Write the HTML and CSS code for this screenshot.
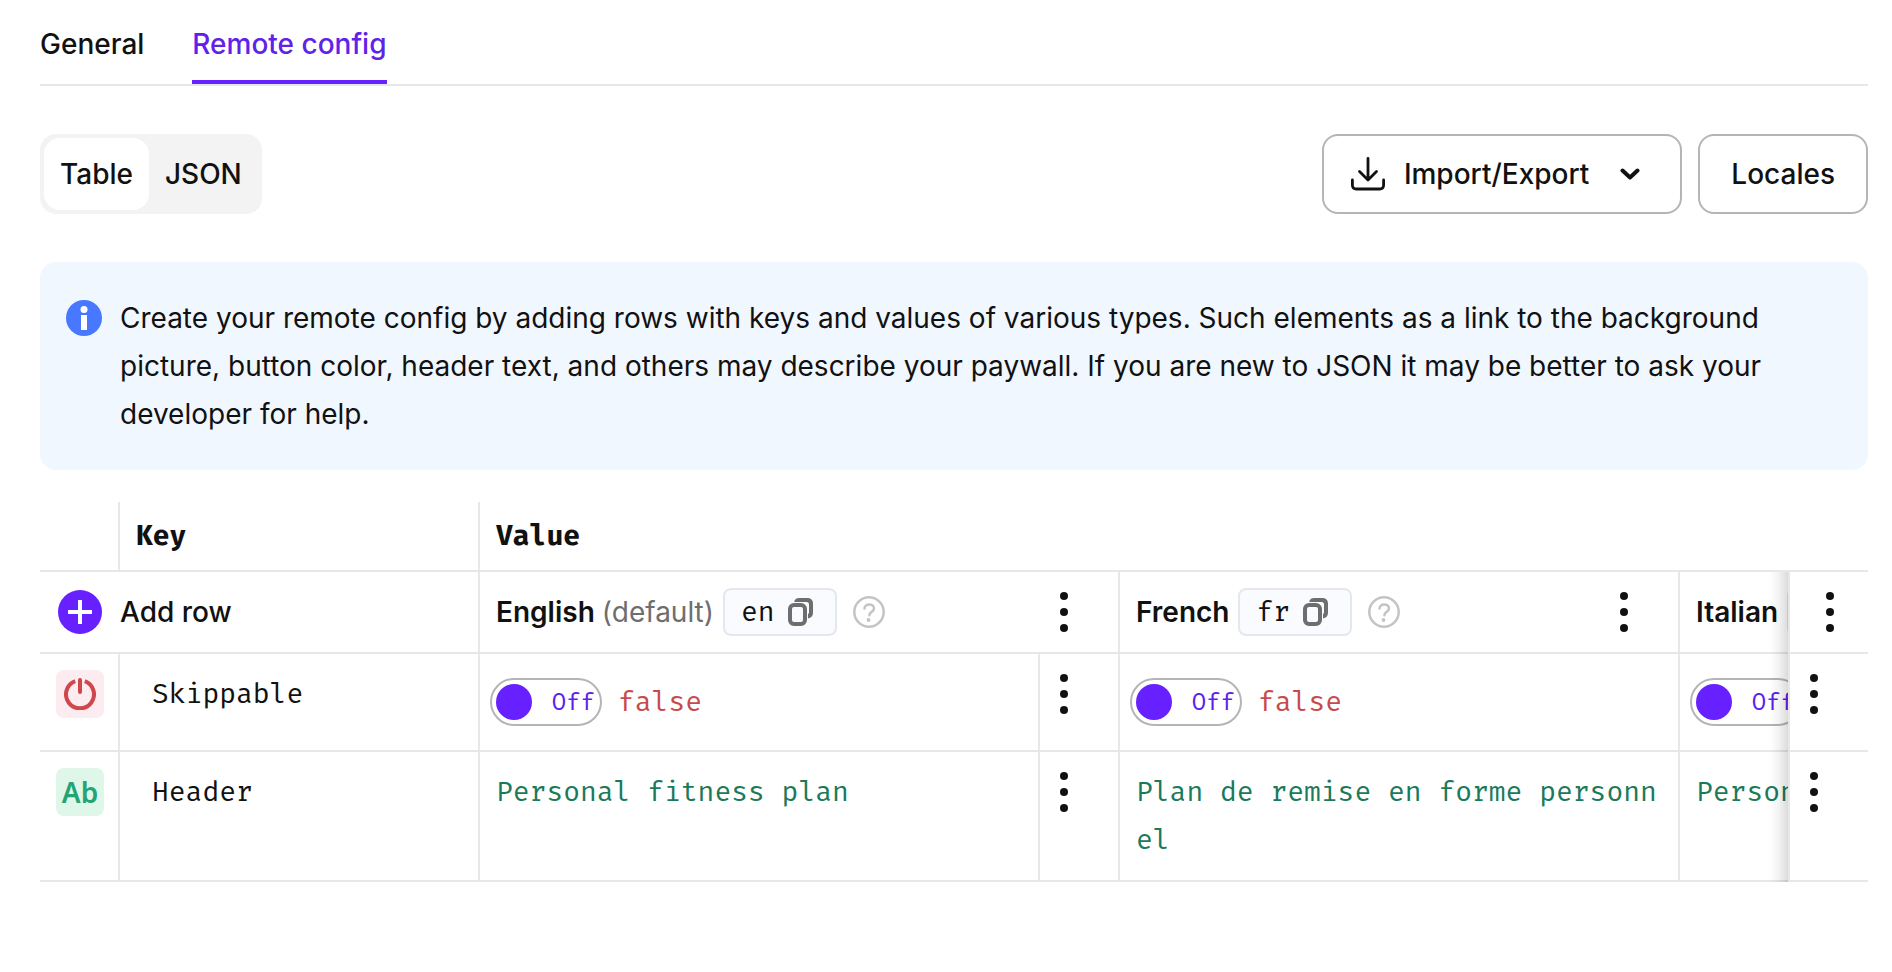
FILE: index.html
```html
<!DOCTYPE html>
<html lang="en">
<head>
<meta charset="utf-8">
<meta name="viewport" content="width=device-width, initial-scale=1">
<title>Remote config</title>
<link rel="stylesheet" href="styles.css">
</head>
<body>
<svg class="sprite" aria-hidden="true">
  <symbol id="dots" viewBox="0 0 48 48"><circle cx="24" cy="8" r="4"/><circle cx="24" cy="24" r="4"/><circle cx="24" cy="40" r="4"/></symbol>
  <symbol id="copy" viewBox="0 0 32 32"><rect x="3" y="9" width="15" height="19" rx="4" fill="none" stroke="currentColor" stroke-width="4"/><path d="M7.500 4.500C8.500 2.800 10.200 2 12 2h8.500c3.300 0 5.500 2.200 5.500 5.500V17c0 3-2 5-5 5.500v-4.500c.7-.4 1-1 1-2V8.500C22 7 21.300 6 19.500 6H7.300z" fill="currentColor"/></symbol>
  <symbol id="help" viewBox="0 0 32 32"><circle cx="16" cy="16" r="14.700" fill="none" stroke="currentColor" stroke-width="2.500"/><path d="M11.500 12.500c0-2.400 2-4 4.700-4s4.800 1.500 4.800 3.900c0 3.400-4.600 3.200-4.600 6.800" fill="none" stroke="currentColor" stroke-width="2.500" stroke-linecap="round"/><circle cx="15.500" cy="24" r="1.900" fill="currentColor"/></symbol>
</svg>
<main class="page">
  <nav class="tabs">
    <a class="tab" href="#general">General</a>
    <a class="tab tab-active" href="#remote-config" aria-current="page">Remote config</a>
  </nav>

  <div class="toolbar">
    <div class="segment">
      <button class="segment-item segment-active" type="button">Table</button>
      <button class="segment-item" type="button">JSON</button>
    </div>
    <div class="actions">
      <button class="button button-menu" type="button">
        <svg class="icon-download" viewBox="0 0 36 36" aria-hidden="true"><path d="M18 2.500V24M9.500 15.500l8.500 8.500 8.500-8.500M2.400 24v5c0 2.500 1.500 4 4 4h23.200c2.500 0 4-1.500 4-4v-5" fill="none" stroke="currentColor" stroke-width="2.800" stroke-linecap="round" stroke-linejoin="round"/></svg>
        <span>Import/Export</span>
        <svg class="icon-chevron" viewBox="0 0 20 12" aria-hidden="true"><path d="M2.500 2.500L10 9.500l7.500-7" fill="none" stroke="currentColor" stroke-width="4" stroke-linecap="round" stroke-linejoin="round"/></svg>
      </button>
      <button class="button" type="button">Locales</button>
    </div>
  </div>

  <section class="notice">
    <svg class="icon-info" viewBox="0 0 36 36" aria-hidden="true"><circle cx="18" cy="18" r="18" fill="#4778ff"/><circle cx="18" cy="9.500" r="3.500" fill="#fff"/><path d="M15 15h6v15h-6z" fill="#fff"/></svg>
    <p class="notice-text">Create your remote config by adding rows with keys and values of various types. Such elements as a link to the background picture, button color, header text, and others may describe your paywall. If you are new to JSON it may be better to ask your developer for help.</p>
  </section>

  <div class="table-scroll">
    <table class="config">
      <colgroup>
        <col class="col-narrow"><col class="col-key"><col class="col-value"><col class="col-narrow"><col class="col-value"><col class="col-value"><col class="col-narrow">
      </colgroup>
      <thead>
        <tr class="row-titles">
          <th class="cell"></th>
          <th class="cell title">Key</th>
          <th class="cell title cell-last" colspan="5">Value</th>
        </tr>
        <tr>
          <th class="cell cell-add" colspan="2">
            <button class="add-row" type="button">
              <svg class="icon-add" viewBox="0 0 44 44" aria-hidden="true"><circle cx="22" cy="22" r="22" fill="#6720ff"/><path d="M22 10v24M10 22h24" stroke="#fff" stroke-width="4"/></svg>
              <span>Add row</span>
            </button>
          </th>
          <th class="cell" colspan="2">
            <div class="locale">
              <span class="locale-name">English <span class="muted">(default)</span></span>
              <button class="code" type="button">en<svg class="icon-copy" aria-hidden="true"><use href="#copy"/></svg></button>
              <svg class="icon-help" aria-hidden="true"><use href="#help"/></svg>
              <button class="more" type="button" aria-label="English options"><svg class="icon-dots"><use href="#dots"/></svg></button>
            </div>
          </th>
          <th class="cell">
            <div class="locale">
              <span class="locale-name">French</span>
              <button class="code" type="button">fr<svg class="icon-copy" aria-hidden="true"><use href="#copy"/></svg></button>
              <svg class="icon-help" aria-hidden="true"><use href="#help"/></svg>
              <button class="more" type="button" aria-label="French options"><svg class="icon-dots"><use href="#dots"/></svg></button>
            </div>
          </th>
          <th class="cell">
            <div class="locale">
              <span class="locale-name">Italian</span>
              <button class="code" type="button">it<svg class="icon-copy" aria-hidden="true"><use href="#copy"/></svg></button>
            </div>
          </th>
          <th class="cell cell-pinned"><button class="more" type="button" aria-label="All locales options"><svg class="icon-dots"><use href="#dots"/></svg></button></th>
        </tr>
      </thead>
      <tbody>
        <tr>
          <td class="cell cell-type"><span class="type type-bool"><svg class="icon-power" viewBox="0 0 32 32" aria-hidden="true"><path d="M11.200 3.200a14 14 0 1 0 9.600 0" fill="none" stroke="currentColor" stroke-width="4"/><path d="M16 2v12" stroke="currentColor" stroke-width="4" stroke-linecap="round"/></svg></span></td>
          <td class="cell cell-key">Skippable</td>
          <td class="cell cell-switch"><div class="bool"><label class="switch"><input class="knob" type="checkbox">Off</label><span class="bool-value">false</span></div></td>
          <td class="cell cell-menu"><button class="more" type="button" aria-label="Skippable English options"><svg class="icon-dots"><use href="#dots"/></svg></button></td>
          <td class="cell cell-switch"><div class="bool"><label class="switch"><input class="knob" type="checkbox">Off</label><span class="bool-value">false</span></div></td>
          <td class="cell cell-switch"><div class="bool"><label class="switch"><input class="knob" type="checkbox">Off</label><span class="bool-value">false</span></div></td>
          <td class="cell cell-menu cell-pinned"><button class="more" type="button" aria-label="Skippable options"><svg class="icon-dots"><use href="#dots"/></svg></button></td>
        </tr>
        <tr>
          <td class="cell cell-type"><span class="type type-text">Ab</span></td>
          <td class="cell cell-key">Header</td>
          <td class="cell cell-text">Personal fitness plan</td>
          <td class="cell cell-menu"><button class="more" type="button" aria-label="Header English options"><svg class="icon-dots"><use href="#dots"/></svg></button></td>
          <td class="cell cell-text">Plan de remise en forme personnel</td>
          <td class="cell cell-text">Personal</td>
          <td class="cell cell-menu cell-pinned"><button class="more" type="button" aria-label="Header options"><svg class="icon-dots"><use href="#dots"/></svg></button></td>
        </tr>
      </tbody>
    </table>
  </div>
</main>
</body>
</html>
```

FILE: styles.css
```css
:root {
  --ink: #111;
  --line: #e7e7e7;
  --accent: #6720ff;
  --sans: Inter, "Liberation Sans", sans-serif;
  --mono: "Fira Mono", "Fira Code", "Liberation Mono", monospace;
}

* { box-sizing: border-box; }

body {
  margin: 0;
  background: #fff;
  color: var(--ink);
  font: 28px/48px var(--sans);
}

button {
  margin: 0;
  padding: 0;
  border: 0;
  background: none;
  color: inherit;
  font: inherit;
  cursor: pointer;
}

svg { display: block; flex: none; }

.sprite { position: absolute; width: 0; height: 0; }

.page { padding: 0 24px 0 40px; }

.tabs {
  display: flex;
  gap: 48px;
  border-bottom: 2px solid var(--line);
}

.tab {
  padding: 20px 0 12px;
  border-bottom: 4px solid transparent;
  color: inherit;
  font-weight: 500;
  text-decoration: none;
}

.tab-active { border-color: var(--accent); color: #6022e8; }

.toolbar {
  display: flex;
  justify-content: space-between;
  margin: 48px 0;
}

.segment {
  display: flex;
  padding: 4px;
  border-radius: 16px;
  background: #f3f3f3;
}

.segment-item {
  height: 72px;
  padding: 0 16px;
  border-radius: 16px;
  font-weight: 500;
}

.segment-active { background: #fff; }

.actions { display: flex; gap: 16px; }

.button {
  display: flex;
  align-items: center;
  height: 80px;
  padding: 0 31px;
  border: 2px solid #b5b5b5;
  border-radius: 16px;
  font-weight: 500;
}

.button-menu { gap: 18px; padding: 0 40px 0 26px; }
.icon-download { width: 36px; height: 36px; }
.icon-chevron { width: 20px; height: 12px; margin-left: 13px; }

.notice {
  display: flex;
  gap: 18px;
  padding: 32px 24px 32px 26px;
  border-radius: 16px;
  background: #f1f7ff;
}

.icon-info { width: 36px; height: 36px; margin-top: 6px; }
.notice-text { margin: 0; }

.table-scroll {
  margin-top: 32px;
  overflow-x: auto;
  scrollbar-width: none;
}

.config {
  width: 2280px;
  table-layout: fixed;
  border-spacing: 0;
}

.col-narrow { width: 80px; }
.col-key { width: 360px; }
.col-value { width: 560px; }

.cell {
  padding: 16px;
  border-right: 2px solid var(--line);
  border-bottom: 2px solid var(--line);
  text-align: left;
  vertical-align: top;
  font-weight: 400;
}

.row-titles .cell { padding: 10px 16px; }
.row-titles .title { font-family: var(--mono); font-weight: 600; }
.cell-last { border-right: 0; }

.cell-add { padding: 16px 18px; }
.add-row { display: flex; align-items: center; gap: 18px; font-weight: 500; }
.icon-add { width: 44px; height: 44px; }

.locale {
  display: flex;
  align-items: center;
  margin-right: 14px;
}

.locale-name { margin-right: 9px; font-weight: 600; }
.muted { color: #6e6e6e; font-weight: 400; }

.code {
  display: flex;
  align-items: center;
  gap: 12px;
  height: 48px;
  padding: 0 16px;
  border: 2px solid #e4e8ee;
  border-radius: 8px;
  background: #f9fbfe;
  font-family: var(--mono);
}

.icon-copy { width: 32px; height: 32px; color: #6e6e6e; }
.icon-help { width: 32px; height: 32px; margin-left: 16px; color: #c4c4c4; }

.more { display: block; width: 48px; height: 48px; }
.locale .more { margin-left: auto; }
.icon-dots { width: 48px; height: 48px; fill: var(--ink); }

.cell-menu { padding: 16px 0; }

.cell-pinned {
  position: sticky;
  right: 0;
  border-right: 0;
  border-left: 2px solid var(--line);
  background: #fff;
}

.cell-pinned::before {
  content: "";
  position: absolute;
  top: 0;
  right: calc(100% + 2px);
  bottom: -2px;
  width: 18px;
  background: linear-gradient(to left, rgba(0, 0, 0, 0.14), rgba(0, 0, 0, 0.05) 50%, transparent);
}

.type {
  display: flex;
  align-items: center;
  justify-content: center;
  width: 48px;
  height: 48px;
  border-radius: 8px;
}

.type-bool { background: #fcebef; color: #cf474a; }
.type-text { background: #dff7e9; color: #24a474; font-family: "Noto Sans", sans-serif; font-weight: 600; }
.icon-power { width: 32px; height: 32px; }

.cell-key { padding: 16px 32px; font-family: var(--mono); }
.cell-text { font-family: var(--mono); color: #1a7a5a; word-break: break-all; }

.cell-switch { padding: 24px 10px; font-family: var(--mono); }
.bool { display: flex; gap: 16px; }
.bool-value { color: #c94a4d; }

.switch {
  display: flex;
  align-items: center;
  justify-content: space-between;
  width: 112px;
  height: 48px;
  padding: 0 5px 0 4px;
  border: 2px solid #b5b5b5;
  border-radius: 24px;
  color: #6022e8;
  font-size: 24px;
}

.knob {
  appearance: none;
  width: 36px;
  height: 36px;
  margin: 0;
  border-radius: 50%;
  background: var(--accent);
}
```
